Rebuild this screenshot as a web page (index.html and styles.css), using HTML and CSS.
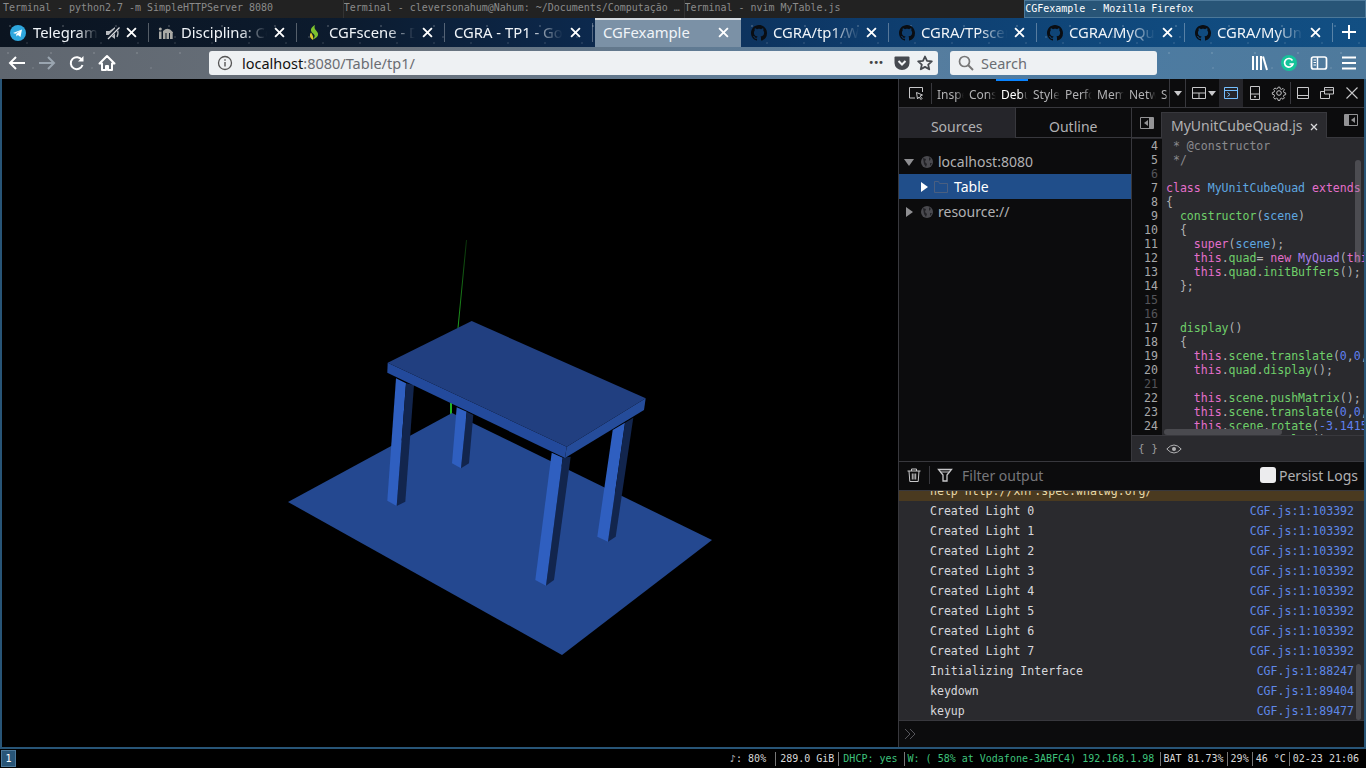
FILE: index.html
```html
<!DOCTYPE html>
<html lang="en">
<head>
<meta charset="utf-8">
<title>CGFexample - Mozilla Firefox</title>
<link rel="stylesheet" href="styles.css">
</head>
<body>
<div class="screen">
  <div class="titlebar">
    <div class="win">Terminal - python2.7 -m SimpleHTTPServer 8080</div>
    <div class="win">Terminal - cleversonahum@Nahum: ~/Documents/Computação …</div>
    <div class="win">Terminal - nvim MyTable.js</div>
    <div class="win win-active">CGFexample - Mozilla Firefox</div>
  </div>
  <div class="chrome">
    <div class="tabstrip">
      <div class="tab">
        <svg class="fav" viewBox="0 0 16 16"><circle cx="8" cy="8" r="8" fill="#2ea6dd"/><path d="M3 8l9-3.6-1.500 7.600-2.600-1.900-1.400 1.300-.3-2.300 4.100-3.400-5 3z" fill="#fff"/></svg>
        <span class="tab-title">Telegram</span>
        <svg class="mute" viewBox="0 0 16 16"><path d="M1 6h3.500L10 2v12l-5.500-4H1z" fill="#b9bcc0"/><path d="M12 4q2 4 0 8" fill="none" stroke="#b9bcc0" stroke-width="1.300"/><path d="M14.500 1.500L2 14" stroke="#101a28" stroke-width="3.200"/><path d="M14.500 2.500L3 14" stroke="#d8dadd" stroke-width="1.300"/></svg>
        <svg class="x" viewBox="0 0 10 10"><path d="M1 1l8 8M9 1l-8 8"/></svg>
      </div>
      <div class="tab">
        <svg class="fav" viewBox="0 0 16 16"><g fill="#a9a9a5"><path d="M1 6.500h2.500V14H1zM5 6h2.500v8H5zM8.500 7h2.500v7H8.500zM12 7h2.700v7H12z"/><circle cx="2.300" cy="4" r="1.500"/><path d="M5 6q5-5 9.700 1v1H5z"/></g></svg>
        <span class="tab-title">Disciplina: Computação</span>
        <svg class="x" viewBox="0 0 10 10"><path d="M1 1l8 8M9 1l-8 8"/></svg>
      </div>
      <div class="tab">
        <svg class="fav" viewBox="0 0 16 16"><path d="M9 0C4 3 4 6 7 8.500c2 1.700 2.500 3-.3 6 5.500-2 6.800-5.500 3.800-8.500C8.500 4 8 2.500 9 0z" fill="#7cc22e"/><path d="M5 7.500c-2 2.500-1 6 2 7.500.6-2 .3-4.500-2-7.500z" fill="#dcc62c"/></svg>
        <span class="tab-title">CGFscene - Documentation</span>
        <svg class="x" viewBox="0 0 10 10"><path d="M1 1l8 8M9 1l-8 8"/></svg>
      </div>
      <div class="tab">
        <span class="tab-title">CGRA - TP1 - Google</span>
        <svg class="x" viewBox="0 0 10 10"><path d="M1 1l8 8M9 1l-8 8"/></svg>
      </div>
      <div class="tab tab-active">
        <span class="tab-title">CGFexample</span>
        <svg class="x" viewBox="0 0 10 10"><path d="M1 1l8 8M9 1l-8 8"/></svg>
      </div>
      <div class="tab">
        <svg class="fav gh" viewBox="0 0 16 16"><path d="M8 0C3.58 0 0 3.58 0 8c0 3.54 2.29 6.53 5.47 7.59.4.07.55-.17.55-.38 0-.19-.01-.82-.01-1.49-2.01.37-2.53-.49-2.69-.94-.09-.23-.48-.94-.82-1.13-.28-.15-.68-.52-.01-.53.63-.01 1.08.58 1.23.82.72 1.21 1.87.87 2.33.66.07-.52.28-.87.51-1.07-1.78-.2-3.64-.89-3.64-3.95 0-.87.31-1.59.82-2.15-.08-.2-.36-1.02.08-2.12 0 0 .67-.21 2.2.82.64-.18 1.32-.27 2-.27.68 0 1.36.09 2 .27 1.53-1.04 2.2-.82 2.2-.82.44 1.1.16 1.92.08 2.12.51.56.82 1.27.82 2.15 0 3.07-1.87 3.75-3.65 3.95.29.25.54.73.54 1.48 0 1.07-.01 1.93-.01 2.2 0 .21.15.46.55.38A8.013 8.013 0 0016 8c0-4.42-3.58-8-8-8z"/></svg>
        <span class="tab-title">CGRA/tp1/WebGL</span>
        <svg class="x" viewBox="0 0 10 10"><path d="M1 1l8 8M9 1l-8 8"/></svg>
      </div>
      <div class="tab">
        <svg class="fav gh" viewBox="0 0 16 16"><path d="M8 0C3.58 0 0 3.58 0 8c0 3.54 2.29 6.53 5.47 7.59.4.07.55-.17.55-.38 0-.19-.01-.82-.01-1.49-2.01.37-2.53-.49-2.69-.94-.09-.23-.48-.94-.82-1.13-.28-.15-.68-.52-.01-.53.63-.01 1.08.58 1.23.82.72 1.21 1.87.87 2.33.66.07-.52.28-.87.51-1.07-1.78-.2-3.64-.89-3.64-3.95 0-.87.31-1.59.82-2.15-.08-.2-.36-1.02.08-2.12 0 0 .67-.21 2.2.82.64-.18 1.32-.27 2-.27.68 0 1.36.09 2 .27 1.53-1.04 2.2-.82 2.2-.82.44 1.1.16 1.92.08 2.12.51.56.82 1.27.82 2.15 0 3.07-1.87 3.75-3.65 3.95.29.25.54.73.54 1.48 0 1.07-.01 1.93-.01 2.2 0 .21.15.46.55.38A8.013 8.013 0 0016 8c0-4.42-3.58-8-8-8z"/></svg>
        <span class="tab-title">CGRA/TPscene</span>
        <svg class="x" viewBox="0 0 10 10"><path d="M1 1l8 8M9 1l-8 8"/></svg>
      </div>
      <div class="tab">
        <svg class="fav gh" viewBox="0 0 16 16"><path d="M8 0C3.58 0 0 3.58 0 8c0 3.54 2.29 6.53 5.47 7.59.4.07.55-.17.55-.38 0-.19-.01-.82-.01-1.49-2.01.37-2.53-.49-2.69-.94-.09-.23-.48-.94-.82-1.13-.28-.15-.68-.52-.01-.53.63-.01 1.08.58 1.23.82.72 1.21 1.87.87 2.33.66.07-.52.28-.87.51-1.07-1.78-.2-3.64-.89-3.64-3.95 0-.87.31-1.59.82-2.15-.08-.2-.36-1.02.08-2.12 0 0 .67-.21 2.2.82.64-.18 1.32-.27 2-.27.68 0 1.36.09 2 .27 1.53-1.04 2.2-.82 2.2-.82.44 1.1.16 1.92.08 2.12.51.56.82 1.27.82 2.15 0 3.07-1.87 3.75-3.65 3.95.29.25.54.73.54 1.48 0 1.07-.01 1.93-.01 2.2 0 .21.15.46.55.38A8.013 8.013 0 0016 8c0-4.42-3.58-8-8-8z"/></svg>
        <span class="tab-title">CGRA/MyQuad</span>
        <svg class="x" viewBox="0 0 10 10"><path d="M1 1l8 8M9 1l-8 8"/></svg>
      </div>
      <div class="tab">
        <svg class="fav gh" viewBox="0 0 16 16"><path d="M8 0C3.58 0 0 3.58 0 8c0 3.54 2.29 6.53 5.47 7.59.4.07.55-.17.55-.38 0-.19-.01-.82-.01-1.49-2.01.37-2.53-.49-2.69-.94-.09-.23-.48-.94-.82-1.13-.28-.15-.68-.52-.01-.53.63-.01 1.08.58 1.23.82.72 1.21 1.87.87 2.33.66.07-.52.28-.87.51-1.07-1.78-.2-3.64-.89-3.64-3.95 0-.87.31-1.59.82-2.15-.08-.2-.36-1.02.08-2.12 0 0 .67-.21 2.2.82.64-.18 1.32-.27 2-.27.68 0 1.36.09 2 .27 1.53-1.04 2.2-.82 2.2-.82.44 1.1.16 1.92.08 2.12.51.56.82 1.27.82 2.15 0 3.07-1.87 3.75-3.65 3.95.29.25.54.73.54 1.48 0 1.07-.01 1.93-.01 2.2 0 .21.15.46.55.38A8.013 8.013 0 0016 8c0-4.42-3.58-8-8-8z"/></svg>
        <span class="tab-title">CGRA/MyUnitCube</span>
        <svg class="x" viewBox="0 0 10 10"><path d="M1 1l8 8M9 1l-8 8"/></svg>
      </div>
      <svg class="plus" viewBox="0 0 14 14"><path d="M7 0v14M0 7h14"/></svg>
    </div>
    <div class="navbar">
      <svg class="nav-icon" viewBox="0 0 18 18"><path d="M8 3L2 9l6 6M2.500 9H17" fill="none" stroke="#fff" stroke-width="2"/></svg>
      <svg class="nav-icon dim" viewBox="0 0 18 18"><path d="M10 3l6 6-6 6M15.500 9H1" fill="none" stroke="#9aa5b0" stroke-width="2"/></svg>
      <svg class="nav-icon" viewBox="0 0 18 18"><path d="M14.500 11a6 6 0 1 1-.6-5" fill="none" stroke="#fff" stroke-width="2"/><path d="M15.500 2v5.500H10z" fill="#fff"/></svg>
      <svg class="nav-icon" viewBox="0 0 18 18"><path d="M9 2L1.500 9.500H4V16h4v-4h2v4h4V9.500h2.500z" fill="none" stroke="#fff" stroke-width="2" stroke-linejoin="round"/></svg>
      <div class="urlbar">
        <svg class="url-info" viewBox="0 0 16 16"><circle cx="8" cy="8" r="6.500" fill="none" stroke="#555" stroke-width="1.300"/><path d="M7.300 7h1.400v4.500H7.300zM7.300 4.300h1.400v1.500H7.300z" fill="#555"/></svg>
        <div class="url-text"><span class="host">localhost</span>:8080/Table/tp1/</div>
        <span class="url-dots">•••</span>
        <svg class="url-act" viewBox="0 0 16 16"><path d="M1.500 1.500h13q1 0 1 1V8a7.500 7 0 0 1-15 0V2.500q0-1 1-1z" fill="#45494f"/><path d="M4.500 6L8 9.500 11.500 6" fill="none" stroke="#f2f4f6" stroke-width="2"/></svg>
        <svg class="url-act" viewBox="0 0 16 16"><path d="M8 1.500l2 4.400 4.800.5-3.600 3.200 1 4.700L8 11.900l-4.200 2.400 1-4.700L1.200 6.400 6 5.900z" fill="none" stroke="#45494f" stroke-width="1.800" stroke-linejoin="round"/></svg>
      </div>
      <div class="searchbar">
        <svg class="search-glass" viewBox="0 0 16 16"><circle cx="6.500" cy="6.500" r="5" fill="none" stroke="#777" stroke-width="1.700"/><path d="M10 10l5 5" stroke="#777" stroke-width="2"/></svg>
        <span>Search</span>
      </div>
      <div class="nav-right">
        <svg class="tool" viewBox="0 0 18 18"><path d="M2 2h2v14H2zM6 2h2v14H6zM10 2h2v14h-2z" fill="#fff"/><path d="M13 2.500l4 13.500" stroke="#fff" stroke-width="2"/></svg>
        <svg class="tool" viewBox="0 0 18 18"><circle cx="9" cy="9" r="8" fill="#15c39a"/><path d="M12.500 6.500A4.300 4.300 0 1 0 13 10H9.500" fill="none" stroke="#fff" stroke-width="1.700"/></svg>
        <svg class="tool" viewBox="0 0 18 18"><rect x="1.500" y="3" width="15" height="12" rx="2" fill="none" stroke="#fff" stroke-width="1.700"/><path d="M7.500 3v12" stroke="#fff" stroke-width="1.500"/><path d="M3.500 6h2.500M3.500 8.500h2.500M3.500 11h2.500" stroke="#fff"/></svg>
        <svg class="tool" viewBox="0 0 18 18"><path d="M2 3.500h14M2 9h14M2 14.500h14" stroke="#fff" stroke-width="2"/></svg>
      </div>
    </div>
  </div>
  <div class="main">
    <div class="viewport">
      <svg class="scene" viewBox="0 0 896 668">
        <defs>
          <linearGradient id="axis" gradientUnits="userSpaceOnUse" x1="466.500" y1="240" x2="458" y2="328">
            <stop offset="0" stop-color="#0a300a"/>
            <stop offset="1" stop-color="#1f9f1f"/>
          </linearGradient>
        </defs>
        <g transform="translate(-2 -79)">
          <path d="M466.500 240L458 328" stroke="url(#axis)" stroke-width="1" fill="none"/>
          <path d="M451 403v11" stroke="#22b522" stroke-width="2" fill="none"/>
          <polygon points="288,502 452,413 712,540 562,655" fill="#244890"/>
          <polygon points="456.700,407.300 466.700,411.700 461,468.300 452,463.300" fill="#2f5fc0"/>
          <polygon points="466.700,411.700 473.300,415 469,463.300 461,468.300" fill="#12254d"/>
          <polygon points="612.700,430 625,422.700 608,541.700 597.300,536.700" fill="#2f5fc0"/>
          <polygon points="625,422.700 633.300,417.700 615.700,536.700 608,541.700" fill="#12254d"/>
          <polygon points="396,378.300 406,383.300 396.700,506 387.300,500.700" fill="#2f5fc0"/>
          <polygon points="406,383.300 414,385 405.300,501.700 396.700,506" fill="#12254d"/>
          <polygon points="551.700,452.700 562.700,457.700 546,585.700 535.300,580" fill="#2f5fc0"/>
          <polygon points="562.700,457.700 570.700,456.700 554,580 546,585.700" fill="#12254d"/>
          <polygon points="387.700,362.700 566.700,446.700 565,458 387.300,372.700" fill="#234a9c"/>
          <polygon points="566.700,446.700 645.700,398.300 644,410 565,458" fill="#254c9a"/>
          <polygon points="471.700,321 645.700,398.300 566.700,446.700 387.700,362.700" fill="#213f80"/>
        </g>
      </svg>
    </div>
    <div class="devtools">
      <div class="dt-toolbar">
        <div class="dt-pick">
          <svg class="dt-icon" viewBox="0 0 16 16"><path d="M7 13H1.500V2.500h13V7" fill="none" stroke="#c8c8ca" stroke-width="1"/><path d="M8.500 7.500l6 2.500-2.500 1 2 2.500-1 1-2-2.500-1.500 2z" fill="none" stroke="#c8c8ca" stroke-width="1"/></svg>
        </div>
        <div class="dt-tabs">
          <span class="dt-tab">Inspector</span>
          <span class="dt-tab">Console</span>
          <span class="dt-tab dt-tab-on">Debugger</span>
          <span class="dt-tab">Style</span>
          <span class="dt-tab">Performance</span>
          <span class="dt-tab">Memory</span>
          <span class="dt-tab">Network</span>
          <span class="dt-tab dt-tab-last">Storage</span>
        </div>
        <div class="dt-more"><svg class="caret" viewBox="0 0 8 5"><path d="M0 0h8L4 5z" fill="#c8c8ca"/></svg></div>
        <div class="dt-actions">
          <div class="dt-act dt-act-wide">
            <svg class="dt-icon" viewBox="0 0 16 16"><path d="M1.500 2.500h13v11h-13zM1.500 8h13M8 8v5.500" fill="none" stroke="#c8c8ca"/></svg>
            <svg class="caret" viewBox="0 0 8 5"><path d="M0 0h8L4 5z" fill="#c8c8ca"/></svg>
          </div>
          <div class="dt-act dt-act-on">
            <svg class="dt-icon" viewBox="0 0 16 16"><path d="M1.500 2.500h13v11h-13zM1.500 5.500h13" fill="none" stroke="#75bfff"/><path d="M4.500 7.500L7 9.500l-2.500 2" fill="none" stroke="#75bfff"/></svg>
          </div>
          <div class="dt-act">
            <svg class="dt-icon" viewBox="0 0 16 16"><path d="M3.500 1.500h9v13h-9zM3.500 9h9" fill="none" stroke="#c8c8ca"/><circle cx="8" cy="11.700" r="1" fill="#c8c8ca"/></svg>
          </div>
          <div class="dt-act dt-act-sep">
            <svg class="dt-icon" viewBox="0 0 16 16"><circle cx="8" cy="8" r="2.300" fill="none" stroke="#c8c8ca"/><path d="M7 1.500h2l.4 1.900 1.500.6 1.600-1.100 1.500 1.500-1.100 1.600.6 1.500 1.900.4v2l-1.900.4-.6 1.500 1.100 1.600-1.500 1.500-1.600-1.100-1.500.6-.4 1.900H7l-.4-1.900-1.500-.6-1.600 1.100L2 12.900l1.100-1.600-.6-1.500-1.900-.4v-2l1.900-.4.6-1.500L2 3.900l1.500-1.500 1.600 1.100 1.500-.6z" fill="none" stroke="#c8c8ca" transform="translate(.8 .8) scale(.9)"/></svg>
          </div>
          <div class="dt-act">
            <svg class="dt-icon" viewBox="0 0 16 16"><path d="M2.500 2.500h11v11h-11zM2.500 10.500h11" fill="none" stroke="#c8c8ca"/></svg>
          </div>
          <div class="dt-act">
            <svg class="dt-icon" viewBox="0 0 16 16"><path d="M5.500 2.500h9v6.500h-9zM5.500 5h9M1.500 6.500h4M1.500 6.500v7h9V9" fill="none" stroke="#c8c8ca"/></svg>
          </div>
          <div class="dt-act">
            <svg class="dt-icon" viewBox="0 0 16 16"><path d="M2.500 2.500l11 11M13.500 2.500l-11 11" stroke="#c8c8ca" stroke-width="1.100"/></svg>
          </div>
        </div>
      </div>
      <div class="dt-panels">
        <div class="sources">
          <div class="src-tabs">
            <div class="src-tab src-tab-on">Sources</div>
            <div class="src-tab">Outline</div>
          </div>
          <div class="tree">
            <div class="tree-row">
              <svg class="tw" viewBox="0 0 10 10"><path d="M0 2h10L5 9z" fill="#8f8f92"/></svg>
              <svg class="globe" viewBox="0 0 14 14"><circle cx="7" cy="7" r="6" fill="#4a4a4f"/><path d="M3 3l3 1-1 3 2 2-1 3-2-3zM9 2l2 2-2 2zM10 8l2 0-2 3z" fill="#232327"/></svg>
              <span>localhost:8080</span>
            </div>
            <div class="tree-row tree-sel">
              <svg class="tw tw-in" viewBox="0 0 10 10"><path d="M2 0l7 5-7 5z" fill="#fff"/></svg>
              <svg class="folder" viewBox="0 0 14 12"><path d="M.5 11.500V.5h4l1 2h8v9z" fill="none" stroke="#4a5f80"/></svg>
              <span>Table</span>
            </div>
            <div class="tree-row">
              <svg class="tw" viewBox="0 0 10 10"><path d="M2 0l7 5-7 5z" fill="#8f8f92"/></svg>
              <svg class="globe" viewBox="0 0 14 14"><circle cx="7" cy="7" r="6" fill="#4a4a4f"/><path d="M3 3l3 1-1 3 2 2-1 3-2-3zM9 2l2 2-2 2zM10 8l2 0-2 3z" fill="#232327"/></svg>
              <span>resource://</span>
            </div>
          </div>
        </div>
        <div class="editor">
          <div class="ed-tabs">
            <div class="ed-toggle">
              <svg class="toggle" viewBox="0 0 14 12"><path d="M.5.5h13v11H.5zM9.500.5v11" fill="none" stroke="#939395"/><path d="M8 3L4 6l4 3z" fill="#939395"/><path d="M10 1h3v10h-3z" fill="#939395"/></svg>
            </div>
            <div class="ed-tab">
              <span>MyUnitCubeQuad.js</span>
              <svg class="ed-x" viewBox="0 0 8 8"><path d="M1 1l6 6M7 1L1 7" stroke="#d8d8da" stroke-width="1.300"/></svg>
            </div>
            <div class="ed-toggle ed-toggle-r">
              <svg class="toggle" viewBox="0 0 14 12"><path d="M.5.5h13v11H.5zM4.500.5v11" fill="none" stroke="#939395"/><path d="M11 3L7 6l4 3z" fill="#939395"/><path d="M1 1h3v10H1z" fill="#939395"/></svg>
            </div>
          </div>
          <div class="code">
            <div class="line"><span class="ln">4</span><span class="src c"> * @constructor</span></div>
            <div class="line"><span class="ln">5</span><span class="src c"> */</span></div>
            <div class="line"><span class="ln off">6</span><span class="src"></span></div>
            <div class="line"><span class="ln">7</span><span class="src"><i class="k">class</i> <i class="n">MyUnitCubeQuad</i> <i class="k">extends</i> <i class="p">CGFobject</i></span></div>
            <div class="line"><span class="ln">8</span><span class="src">{</span></div>
            <div class="line"><span class="ln">9</span><span class="src">  <i class="f">constructor</i>(<i class="n">scene</i>)</span></div>
            <div class="line"><span class="ln">10</span><span class="src">  {</span></div>
            <div class="line"><span class="ln">11</span><span class="src">    <i class="k">super</i>(<i class="n">scene</i>);</span></div>
            <div class="line"><span class="ln">12</span><span class="src">    <i class="k">this</i>.<i class="f">quad</i>= <i class="k">new</i> <i class="p">MyQuad</i>(<i class="k">this</i>.<i class="f">scene</i>);</span></div>
            <div class="line"><span class="ln">13</span><span class="src">    <i class="k">this</i>.<i class="f">quad</i>.<i class="f">initBuffers</i>();</span></div>
            <div class="line"><span class="ln">14</span><span class="src">  };</span></div>
            <div class="line"><span class="ln off">15</span><span class="src"></span></div>
            <div class="line"><span class="ln off">16</span><span class="src"></span></div>
            <div class="line"><span class="ln">17</span><span class="src">  <i class="f">display</i>()</span></div>
            <div class="line"><span class="ln">18</span><span class="src">  {</span></div>
            <div class="line"><span class="ln">19</span><span class="src">    <i class="k">this</i>.<i class="f">scene</i>.<i class="f">translate</i>(<i class="v">0</i>,<i class="v">0</i>,<i class="v">0.5</i>);</span></div>
            <div class="line"><span class="ln">20</span><span class="src">    <i class="k">this</i>.<i class="f">quad</i>.<i class="f">display</i>();</span></div>
            <div class="line"><span class="ln off">21</span><span class="src"></span></div>
            <div class="line"><span class="ln">22</span><span class="src">    <i class="k">this</i>.<i class="f">scene</i>.<i class="f">pushMatrix</i>();</span></div>
            <div class="line"><span class="ln">23</span><span class="src">    <i class="k">this</i>.<i class="f">scene</i>.<i class="f">translate</i>(<i class="v">0</i>,<i class="v">0</i>,<i class="v">-0.5</i>);</span></div>
            <div class="line"><span class="ln">24</span><span class="src">    <i class="k">this</i>.<i class="f">scene</i>.<i class="f">rotate</i>(<i class="v">-3.14159</i>,<i class="v">0</i>,<i class="v">1</i>,<i class="v">0</i>);</span></div>
            <div class="line"><span class="ln">25</span><span class="src">    <i class="k">this</i>.<i class="f">quad</i>.<i class="f">display</i>();</span></div>
            <div class="vscroll"></div>
            <div class="hscroll"></div>
          </div>
          <div class="ed-foot">
            <span class="braces">{ }</span>
            <svg class="eye" viewBox="0 0 16 12"><path d="M.8 6Q8-2 15.200 6 8 14 .8 6z" fill="none" stroke="#b1b1b3"/><circle cx="8" cy="6" r="2" fill="#b1b1b3"/></svg>
          </div>
        </div>
      </div>
      <div class="console">
        <div class="con-bar">
          <svg class="con-ico" viewBox="0 0 16 16"><path d="M1.500 4h13M5.500 4V2h5v2M3 4l.8 10.500h8.400L13 4M6.300 6.500v6M8 6.500v6M9.700 6.500v6" fill="none" stroke="#c8c8ca"/></svg>
          <span class="con-sep"></span>
          <svg class="con-ico" viewBox="0 0 16 16"><path d="M1.500 2.500h13L10 8v6H6V8z" fill="none" stroke="#c8c8ca" stroke-width="1.300"/><path d="M3.500 5h9" stroke="#c8c8ca"/></svg>
          <span class="con-filter">Filter output</span>
          <label class="persist"><span class="check"></span>Persist Logs</label>
        </div>
        <div class="log">
          <div class="warn-row">help http://xhr.spec.whatwg.org/</div>
          <div class="log-row"><span>Created Light 0</span><span class="loc">CGF.js:1:103392</span></div>
          <div class="log-row"><span>Created Light 1</span><span class="loc">CGF.js:1:103392</span></div>
          <div class="log-row"><span>Created Light 2</span><span class="loc">CGF.js:1:103392</span></div>
          <div class="log-row"><span>Created Light 3</span><span class="loc">CGF.js:1:103392</span></div>
          <div class="log-row"><span>Created Light 4</span><span class="loc">CGF.js:1:103392</span></div>
          <div class="log-row"><span>Created Light 5</span><span class="loc">CGF.js:1:103392</span></div>
          <div class="log-row"><span>Created Light 6</span><span class="loc">CGF.js:1:103392</span></div>
          <div class="log-row"><span>Created Light 7</span><span class="loc">CGF.js:1:103392</span></div>
          <div class="log-row"><span>Initializing Interface</span><span class="loc">CGF.js:1:88247</span></div>
          <div class="log-row"><span>keydown</span><span class="loc">CGF.js:1:89404</span></div>
          <div class="log-row"><span>keyup</span><span class="loc">CGF.js:1:89477</span></div>
          <div class="log-scroll"></div>
        </div>
        <div class="con-input">
          <svg class="prompt" viewBox="0 0 14 12"><path d="M1 1l5 5-5 5M6 1l5 5-5 5" fill="none" stroke="#55555a"/></svg>
        </div>
      </div>
    </div>
  </div>
  <div class="status">
    <div class="ws">1</div>
    <div class="blocks">
      <span class="blk blk-audio">♪: 80%</span>
      <span class="blk blk-disk">289.0 GiB</span>
      <span class="blk blk-dhcp good">DHCP: yes</span>
      <span class="blk blk-wifi good">W: ( 58% at Vodafone-3ABFC4) 192.168.1.98</span>
      <span class="blk blk-bat">BAT 81.73%</span>
      <span class="blk">29%</span>
      <span class="blk">46 °C</span>
      <span class="blk">02-23 21:06</span>
    </div>
  </div>
</div>
</body>
</html>
```

FILE: styles.css
```css
* { box-sizing: border-box; }
html, body { margin: 0; padding: 0; background: #000; }
i { font-style: normal; }
svg { display: block; flex: none; }

.screen {
  width: 1366px; height: 768px; overflow: hidden;
  display: flex; flex-direction: column;
  background: #000;
}

/* window manager title row */
.titlebar { height: 18px; display: flex; flex: none; background: #222; }
.win {
  flex: 1 1 0; min-width: 0; padding-left: 0;
  font: 9.970px/16px "DejaVu Sans Mono", monospace;
  color: #8a8a8a; white-space: pre; overflow: hidden;
  border-right: 1px solid #333;
}
.win:first-child { padding-left: 3px; }
.win-active { color: #fff; background: #285577; border: 1px solid #4c7899; padding-left: 0; margin-left: -1px; }

/* firefox chrome */
.chrome { flex: none; height: 61px; display: flex; flex-direction: column; }
.tabstrip {
  height: 29px; flex: none; display: flex; padding-left: 1px; align-items: stretch;
  background-color: #0f2f52;
  background-image:
    radial-gradient(circle at 10px 8px, rgba(255,255,255,.55) 0, transparent 1px),
    radial-gradient(circle at 41px 19px, rgba(255,255,255,.4) 0, transparent 1px),
    radial-gradient(circle at 27px 25px, rgba(255,255,255,.3) 0, transparent 1px),
    linear-gradient(90deg, #0b1420 0%, #0c1b2e 25%, #0c2a50 45%, #0e3d6e 65%, #104a7e 85%, #124f83 100%);
  background-size: 53px 29px, 67px 29px, 37px 29px, 100% 100%;
}
.tab {
  width: 148px; flex: none; display: flex; align-items: center; gap: 7px;
  padding: 0 12px 0 9px; position: relative;
  font: 14.800px/29px "Noto Sans", sans-serif; color: #f0f4f8;
}
.tab::after {
  content: ""; position: absolute; right: 0; top: 5px; bottom: 5px; width: 1px;
  background: rgba(255,255,255,.3);
}
.tab-active {
  margin-left: 2px; width: 146px; padding-left: 8px;
  background: #7b91a6;
  box-shadow: inset 0 2px 0 #d4dae0;
}
.tab-active::after { display: none; }
.fav { width: 16px; height: 16px; }
.gh { fill: #0a0d12; margin: 0 -1px 0 1px; }
.tab-title {
  flex: 1 1 0; min-width: 0; overflow: hidden; white-space: nowrap;
  -webkit-mask-image: linear-gradient(90deg, #000 68%, transparent 100%);
  mask-image: linear-gradient(90deg, #000 68%, transparent 100%);
}
.tab-active .tab-title { -webkit-mask-image: none; mask-image: none; }
.mute { width: 16px; height: 16px; margin-right: -2px; }
.x { width: 11px; height: 11px; fill: none; stroke: #fff; stroke-width: 1.700; }
.plus { width: 14px; height: 14px; margin: 7px 0 0 9px; fill: none; stroke: #fff; stroke-width: 2; }

.navbar {
  height: 32px; flex: none; display: flex; align-items: center; padding-left: 8px;
  background-color: #5b7186;
  background-image:
    radial-gradient(circle at 8px 6px, rgba(255,255,255,.4) 0, transparent 1px),
    radial-gradient(circle at 33px 21px, rgba(255,255,255,.3) 0, transparent 1px),
    linear-gradient(90deg, #5f666f 0%, #69727c 30%, #5c7e9c 60%, #4c7ba2 80%, #4f7a9c 100%);
  background-size: 43px 32px, 59px 32px, 100% 100%;
}
.nav-icon { width: 18px; height: 18px; margin-right: 12px; }
.urlbar {
  margin-left: 81px; width: 729px; height: 24px; flex: none;
  display: flex; align-items: center;
  background: #eef1f3; border-radius: 3px; padding: 0 3px 0 8px;
}
.url-info { width: 16px; height: 16px; margin-right: 9px; }
.url-text { flex: 1; font: 14.500px/24px "Noto Sans", sans-serif; color: #6a6d72; white-space: nowrap; }
.host { color: #111; }
.url-dots { font: 10px/24px "DejaVu Sans", sans-serif; color: #444; margin-right: 6px; letter-spacing: -1px; }
.url-act { width: 16px; height: 16px; margin: 0 2px 0 5px; }
.searchbar {
  margin-left: 12px; width: 207px; height: 24px; flex: none;
  display: flex; align-items: center; gap: 7px; padding-left: 8px;
  background: #eef1f3; border-radius: 3px;
  font: 14.500px/24px "Noto Sans", sans-serif; color: #6a6d72;
}
.search-glass { width: 16px; height: 16px; }
.nav-right { margin-left: 93px; display: flex; gap: 12px; }
.tool { width: 18px; height: 18px; }

/* main split */
.main {
  flex: none; height: 668px; display: flex;
  border-left: 2px solid #285577; border-right: 2px solid #285577;
  background: #000;
}
.viewport { width: 896px; flex: none; background: #000; }
.scene { width: 896px; height: 668px; }

.devtools {
  flex: 1; min-width: 0; display: flex; flex-direction: column;
  background: #0c0c0d; border-left: 1px solid #38383d;
  font-family: "Noto Sans", sans-serif; color: #b1b1b3;
}
.dt-toolbar {
  height: 29px; flex: none; display: flex; align-items: stretch;
  border-bottom: 1px solid #38383d; background: #0c0c0d;
}
.dt-pick {
  width: 32px; flex: none; display: flex; align-items: center; justify-content: center;
  padding-left: 1px;
}
.dt-icon { width: 16px; height: 16px; }
.dt-tabs {
  width: 238px; flex: none; display: flex; padding-left: 5px;
  border-left: 1px solid #38383d; margin: 4px 0 3px;
}
.dt-tab {
  width: 32px; flex: none; overflow: hidden; white-space: nowrap;
  font-size: 12px; line-height: 23px; color: #b1b1b3;
  -webkit-mask-image: linear-gradient(90deg, #000 58%, transparent 84%);
  mask-image: linear-gradient(90deg, #000 58%, transparent 84%);
}
.dt-tab-last { width: 8px; }
.dt-tab-on { color: #fff; }
.dt-tabs { position: relative; }
.dt-tabs::before {
  content: ""; position: absolute; left: 64px; top: -4px; width: 32px; height: 2px; background: #0a84ff;
}
.dt-more {
  width: 17px; flex: none; display: flex; align-items: center; justify-content: center;
  border-left: 1px solid #38383d; border-right: 1px solid #38383d;
}
.caret { width: 8px; height: 5px; }
.dt-actions { flex: 1; display: flex; align-items: center; }
.dt-act { width: 24px; height: 100%; flex: none; display: flex; align-items: center; justify-content: center; }
.dt-act-wide { width: 33px; gap: 1px; padding-left: 2px; }
.dt-act-on { background: #25252a; }
.dt-act-sep { border-right: 1px solid #38383d; height: 22px; }
.dt-act:last-child { width: 25px; }

.dt-panels { height: 354px; flex: none; display: flex; border-bottom: 1px solid #38383d; }
.sources { width: 233px; flex: none; display: flex; flex-direction: column; border-right: 1px solid #38383d; }
.src-tabs { height: 30px; flex: none; display: flex; border-bottom: 1px solid #38383d; }
.src-tab {
  flex: 1 1 0; text-align: center; font-size: 14px; height: 30px; line-height: 38px;
  color: #b1b1b3;
}
.src-tab-on { background: #25252a; border-right: 1px solid #38383d; }
.tree { padding-top: 11px; font-size: 14px; }
.tree-row { height: 25px; display: flex; align-items: center; color: #b1b1b3; padding-left: 5px; white-space: nowrap; }
.tree-sel { background: #204e8a; color: #fff; padding-left: 0; }
.tw { width: 10px; height: 10px; }
.tw-in { margin-left: 20px; }
.globe { width: 14px; height: 14px; margin: 0 4px 0 6px; }
.folder { width: 14px; height: 12px; margin: 0 6px 0 5px; }

.editor { flex: 1; min-width: 0; display: flex; flex-direction: column; }
.ed-tabs { height: 30px; flex: none; display: flex; border-bottom: 1px solid #38383d; align-items: flex-end; }
.ed-toggle { width: 29px; height: 29px; flex: none; display: flex; align-items: center; justify-content: center; }
.toggle { width: 14px; height: 12px; }
.ed-toggle-r { flex: 1; justify-content: flex-end; padding-right: 6px; align-self: flex-start; height: 24px; }
.ed-tab {
  width: 166px; height: 26px; flex: none; margin-bottom: -1px;
  display: flex; align-items: center; gap: 7px; padding-left: 9px;
  background: #2a2a2e; border: 1px solid #38383d; border-bottom: 0;
  font-size: 14px; color: #b1b1b3; white-space: nowrap; overflow: hidden;
}
.ed-x { width: 8px; height: 8px; margin-top: 3px; }

.code { flex: 1; min-height: 0; overflow: hidden; position: relative; background: #2a2a2e; padding-top: 1px; }
.line { display: flex; height: 14px; font: 11.560px/14px "DejaVu Sans Mono", monospace; color: #b1b1b3; white-space: pre; }
.ln { width: 30px; flex: none; text-align: right; padding-right: 4px; background: #0c0c0d; color: #a8a8aa; }
.ln.off { color: #55555a; }
.src { padding-left: 4px; white-space: pre; overflow: hidden; flex: 1; }
.c { color: #8b8b8e; }
.k { color: #e56fcb; }
.n { color: #5fa8e0; }
.f { color: #6fcf6a; }
.p { color: #a97fe8; }
.v { color: #5f80f0; }
.vscroll { position: absolute; left: 223px; top: 22px; width: 6px; height: 103px; border-radius: 3px; background: rgba(128,128,134,.4); }
.hscroll { position: absolute; left: 32px; bottom: 0; width: 118px; height: 6px; border-radius: 3px; background: #4a4a4f; }
.ed-foot { height: 26px; flex: none; display: flex; align-items: center; gap: 8px; padding-left: 6px; background: #2a2a2e; border-top: 1px solid #38383d; }
.braces { font: 11px "DejaVu Sans Mono", monospace; color: #9a9a9c; }
.eye { width: 16px; height: 12px; }

.console { flex: 1; min-height: 0; display: flex; flex-direction: column; }
.con-bar { height: 29px; flex: none; display: flex; align-items: center; background: #0c0c0d; padding: 0 0 2px 7px; border-bottom: 1px solid #38383d; }
.con-ico { width: 16px; height: 16px; }
.con-sep { width: 1px; height: 18px; background: #38383d; margin: 0 7px 0 7px; }
.con-filter { flex: 1; margin-left: 9px; font-size: 14px; color: #77777b; }
.persist { display: flex; align-items: center; gap: 3px; font-size: 14px; color: #b1b1b3; padding-right: 6px; }
.check { width: 16px; height: 16px; background: #ececee; border-radius: 3px; display: block; }
.log { flex: 1; min-height: 0; background: #2a2a2e; position: relative; overflow: hidden; font: 11.560px/20px "DejaVu Sans Mono", monospace; color: #d7d7db; }
.warn-row { height: 10px; background: #4a3a20; color: #e8d9a8; padding-left: 31px; line-height: 0; overflow: hidden; }
.log-row { height: 20px; display: flex; justify-content: space-between; padding: 0 10px 0 31px; }
.loc { color: #5f88e8; }
.log-scroll { position: absolute; right: 3px; top: 173px; bottom: 0; width: 5px; border-radius: 3px; background: #4a4a4f; }
.con-input { height: 27px; flex: none; background: #0c0c0d; border-top: 1px solid #38383d; display: flex; align-items: center; padding-left: 5px; }
.prompt { width: 14px; height: 12px; }

/* i3 status row */
.status {
  flex: none; height: 21px; display: flex; align-items: stretch; justify-content: space-between;
  border-top: 2px solid #285577; background: #000;
  font: 10px/19px "DejaVu Sans Mono", monospace; color: #d8d8d8; white-space: pre;
}
.ws {
  width: 15px; margin: 1px 0 0 1px; height: 17px; text-align: center; line-height: 15px;
  background: #285577; border: 1px solid #4c7899; color: #fff; font-size: 10px;
}
.blocks { display: flex; padding-right: 4px; }
.blk { padding: 0 3px; border-left: 1px solid #777; height: 14px; line-height: 14px; margin-top: 3px; }
.blk:first-child { border-left: 0; }
.blk-audio { padding-right: 9px; }
.blk-disk { padding: 0 4px 0 4px; }
.blk-dhcp { padding: 0 6px 0 4px; }
.blk-wifi { padding: 0 6px 0 3px; }
.blk-bat { padding: 0 3px 0 2px; }
.good { color: #3ec27c; }
```
